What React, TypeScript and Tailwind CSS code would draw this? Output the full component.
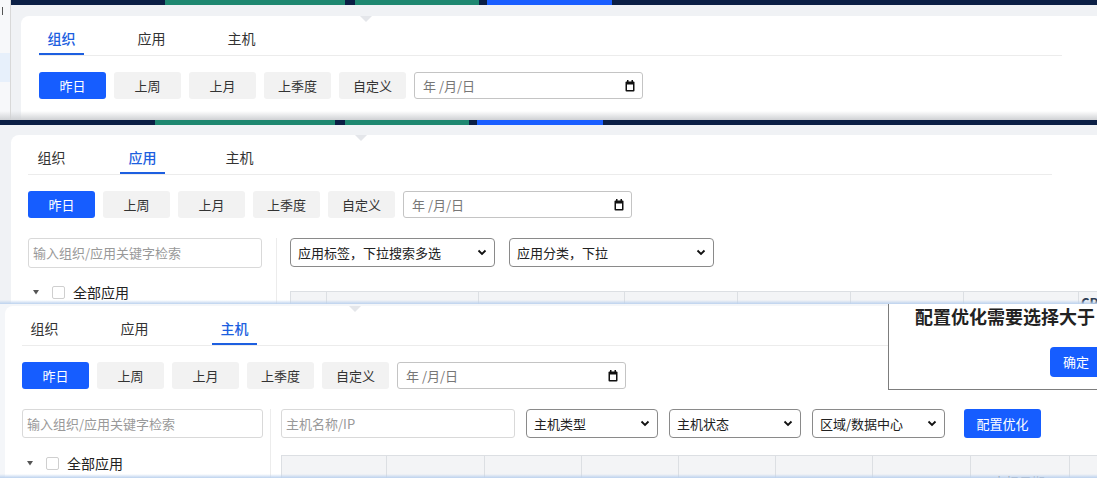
import React from "react";

const BTNS = ["上周", "上月", "上季度", "自定义"];

function NavBar({ segs }: { segs: [number, string][] }) {
  return (
    <div className="flex h-[5px] w-full shrink-0 bg-[#0b1f45]">
      {segs.map(([w, c], i) => (
        <div key={i} className={c} style={{ width: w }} />
      ))}
    </div>
  );
}

function Tab({ label, active, ml }: { label: string; active?: boolean; ml: string }) {
  return (
    <div
      className={`${ml} flex h-full w-[45px] items-center justify-center border-b-2 pt-2 text-[14px] ${
        active ? "border-[#1d5fe0] font-medium text-[#1d5fe0]" : "border-transparent text-[#333]"
      }`}
    >
      {label}
    </div>
  );
}

function DateBox() {
  return (
    <div className="ml-2 flex h-[27px] w-[229px] items-center justify-between rounded-[3px] border border-[#c4c4c4] bg-white pl-2 pr-[7px] text-[13px] text-[#777]">
      <span>年 /月/日</span>
      <svg width="10" height="12" viewBox="0 0 10 12">
        <rect x="0.5" y="1.5" width="9" height="10" rx="1" fill="#111" />
        <rect x="2" y="4.5" width="6" height="5.5" fill="#fff" />
        <rect x="2" y="0" width="1.5" height="2.5" fill="#111" />
        <rect x="6.5" y="0" width="1.5" height="2.5" fill="#111" />
      </svg>
    </div>
  );
}

function RangeRow() {
  return (
    <div className="mt-[16px] flex items-center">
      <div className="flex h-[27px] w-[67px] items-center justify-center rounded-[3px] bg-[#165dff] text-[13px] text-white">
        昨日
      </div>
      {BTNS.map((b) => (
        <div
          key={b}
          className="ml-2 flex h-[27px] w-[67px] items-center justify-center rounded-[3px] bg-[#f2f2f2] text-[13px] text-[#333]"
        >
          {b}
        </div>
      ))}
      <DateBox />
    </div>
  );
}

function Select({ label, w }: { label: string; w: string }) {
  return (
    <div
      className={`${w} flex h-[29px] shrink-0 items-center justify-between rounded-[4px] border border-[#8a8a8a] bg-white pl-[7px] pr-[7px] text-[13px] text-[#222]`}
    >
      <span>{label}</span>
      <svg width="10" height="7" viewBox="0 0 10 7">
        <path d="M1.5 1.5l3.5 3.5 3.5-3.5" fill="none" stroke="#111" strokeWidth="1.8" />
      </svg>
    </div>
  );
}

function TreeRow({ mt }: { mt: string }) {
  return (
    <div className={`${mt} flex items-center text-[14px] text-[#222]`}>
      <svg className="ml-[5px]" width="6" height="5" viewBox="0 0 6 5">
        <path d="M0 0h6L3 4.5z" fill="#555" />
      </svg>
      <span className="ml-[13px] h-[13px] w-[13px] rounded-[2px] border border-[#cfcfcf] bg-white" />
      <span className="ml-[8px]">全部应用</span>
    </div>
  );
}

function Notch({ left }: { left: string }) {
  return (
    <div
      className={`absolute top-0 ${left} h-0 w-0 border-x-[6px] border-t-[6px] border-x-transparent border-t-[#e4e6ea]`}
    />
  );
}

export default function App() {
  return (
    <div className="relative flex h-[478px] w-[1097px] flex-col overflow-hidden bg-[#f0f2f5] font-['Noto_Sans_CJK_SC',sans-serif]">
      {/* ==== 组织 ==== */}
      <div className="relative flex h-[120px] shrink-0 overflow-hidden">
        <div className="relative w-[11px] shrink-0 border-r border-[#d8d8d8] bg-[#f7f8fa]">
          <div className="ml-[2px] mt-[7px] h-[8px] w-[1px] bg-[#555]" />
          <div className="mt-[38px] h-[29px] w-full bg-[#e7f0fb]" />
        </div>
        <div className="flex flex-1 flex-col">
          <NavBar
            segs={[
              [154, "bg-[#0b1f45]"],
              [180, "bg-[#1e8770]"],
              [10, "bg-[#0b1f45]"],
              [124, "bg-[#1e8770]"],
              [8, "bg-[#0b1f45]"],
              [125, "bg-[#1a5eff]"],
            ]}
          />
          <div className="flex-1 pl-[10px] pt-[11px]">
            <div className="relative h-full rounded-tl-lg bg-white pl-[18px]">
              <Notch left="left-[339px]" />
              <div className="flex h-[40px] w-[1023px] border-b border-[#ececec]">
                <Tab label="组织" active ml="ml-0" />
                <Tab label="应用" ml="ml-[45px]" />
                <Tab label="主机" ml="ml-[45px]" />
              </div>
              <RangeRow />
            </div>
          </div>
        </div>
        <div className="absolute bottom-0 left-0 h-[9px] w-full bg-linear-to-b from-transparent to-[#cfd1d4]" />
      </div>

      {/* ==== 应用 ==== */}
      <div className="relative flex h-[184px] shrink-0 flex-col overflow-hidden">
        <NavBar
          segs={[
            [155, "bg-[#0b1f45]"],
            [180, "bg-[#1e8770]"],
            [10, "bg-[#0b1f45]"],
            [124, "bg-[#1e8770]"],
            [8, "bg-[#0b1f45]"],
            [126, "bg-[#1a5eff]"],
          ]}
        />
        <div className="flex-1 pl-[11px] pt-[10px]">
          <div className="relative h-full rounded-tl-lg bg-white pl-[17px]">
            <Notch left="left-[344px]" />
            <div className="flex h-[40px] w-[1024px] border-b border-[#ececec]">
              <Tab label="组织" ml="ml-px" />
              <Tab label="应用" active ml="ml-[46px]" />
              <Tab label="主机" ml="ml-[52px]" />
            </div>
            <RangeRow />
            <div className="mt-[20px] flex">
              <div className="w-[249px] shrink-0 border-r border-[#ececec]">
                <div className="flex h-[30px] w-[234px] items-center rounded-[3px] border border-[#d9d9d9] px-[4px] text-[13px] text-[#999]">
                  输入组织/应用关键字检索
                </div>
                <TreeRow mt="mt-[14px]" />
              </div>
              <div className="flex-1 pl-[13px]">
                <div className="flex gap-[14px]">
                  <Select label="应用标签，下拉搜索多选" w="w-[205px]" />
                  <Select label="应用分类，下拉" w="w-[205px]" />
                </div>
                <div className="mt-[24px] flex h-[30px] border-t border-l border-[#dcdfe3] bg-[#f3f4f6]">
                  {[36, 152, 146, 113, 113, 113, 115].map((w, i) => (
                    <div key={i} className="shrink-0 border-r border-[#dcdfe3]" style={{ width: w }} />
                  ))}
                  <div className="pl-[2px] pt-[1px] text-[13px] font-semibold text-[#2f3d55]">CPU</div>
                </div>
              </div>
            </div>
          </div>
        </div>
        <div className="absolute bottom-0 left-0 h-[4px] w-full bg-linear-to-b from-transparent to-[#bcd2ee]" />
      </div>

      {/* ==== 主机 ==== */}
      <div className="relative flex flex-1 flex-col overflow-hidden bg-[#f4f6f9] pt-[2px]">
        <div className="flex-1 pl-[5px]">
          <div className="relative h-full rounded-tl-lg bg-white pl-[17px]">
            <Notch left="left-[344px]" />
            <div className="flex h-[40px] w-[1024px] border-b border-[#ececec]">
              <Tab label="组织" ml="ml-0" />
              <Tab label="应用" ml="ml-[45px]" />
              <Tab label="主机" active ml="ml-[55px]" />
            </div>
            <RangeRow />
            <div className="mt-[20px] flex">
              <div className="w-[249px] shrink-0 border-r border-[#ececec]">
                <div className="flex h-[29px] w-[241px] items-center rounded-[3px] border border-[#d9d9d9] px-[4px] text-[13px] text-[#999]">
                  输入组织/应用关键字检索
                </div>
                <TreeRow mt="mt-[15px]" />
              </div>
              <div className="flex-1 pl-[10px]">
                <div className="flex items-center">
                  <div className="flex h-[29px] w-[234px] shrink-0 items-center rounded-[3px] border border-[#d9d9d9] px-[4px] text-[13px] text-[#999]">
                    主机名称/IP
                  </div>
                  <div className="ml-[11px] flex gap-[11px]">
                    <Select label="主机类型" w="w-[132px]" />
                    <Select label="主机状态" w="w-[132px]" />
                    <Select label="区域/数据中心" w="w-[133px]" />
                  </div>
                  <div className="ml-[19px] flex h-[29px] w-[77px] shrink-0 items-center justify-center rounded-[3px] bg-[#165dff] text-[13px] text-white">
                    配置优化
                  </div>
                </div>
                <div className="mt-[17px] flex h-[30px] border-t border-l border-[#dcdfe3] bg-[#f3f4f6]">
                  {[105, 98, 97, 97, 97, 97, 98].map((w, i) => (
                    <div key={i} className="shrink-0 border-r border-[#dcdfe3]" style={{ width: w }} />
                  ))}
                  <div className="w-[99px] shrink-0 border-r border-[#dcdfe3] pl-[22px] pt-[16px] text-[13px] text-[#333]">
                    上报日期
                  </div>
                </div>
              </div>
            </div>
          </div>
        </div>

        {/* 弹窗 */}
        <div className="absolute left-[888px] top-0 h-[86px] w-[260px] border-b border-l border-[#7d7d7d] bg-white">
          <div className="pl-[26px] pt-[2px] text-[18px] font-bold leading-[20px] text-[#222]">
            配置优化需要选择大于
          </div>
          <div className="ml-[161px] mt-[21px] flex h-[30px] w-[80px] items-center justify-center rounded-[4px] bg-[#165dff] text-[13px] text-white">
            <span className="-ml-[28px]">确定</span>
          </div>
        </div>
        <div className="absolute bottom-0 left-0 h-[4px] w-full bg-linear-to-b from-transparent to-[#bcd2ee]" />
      </div>
    </div>
  );
}
